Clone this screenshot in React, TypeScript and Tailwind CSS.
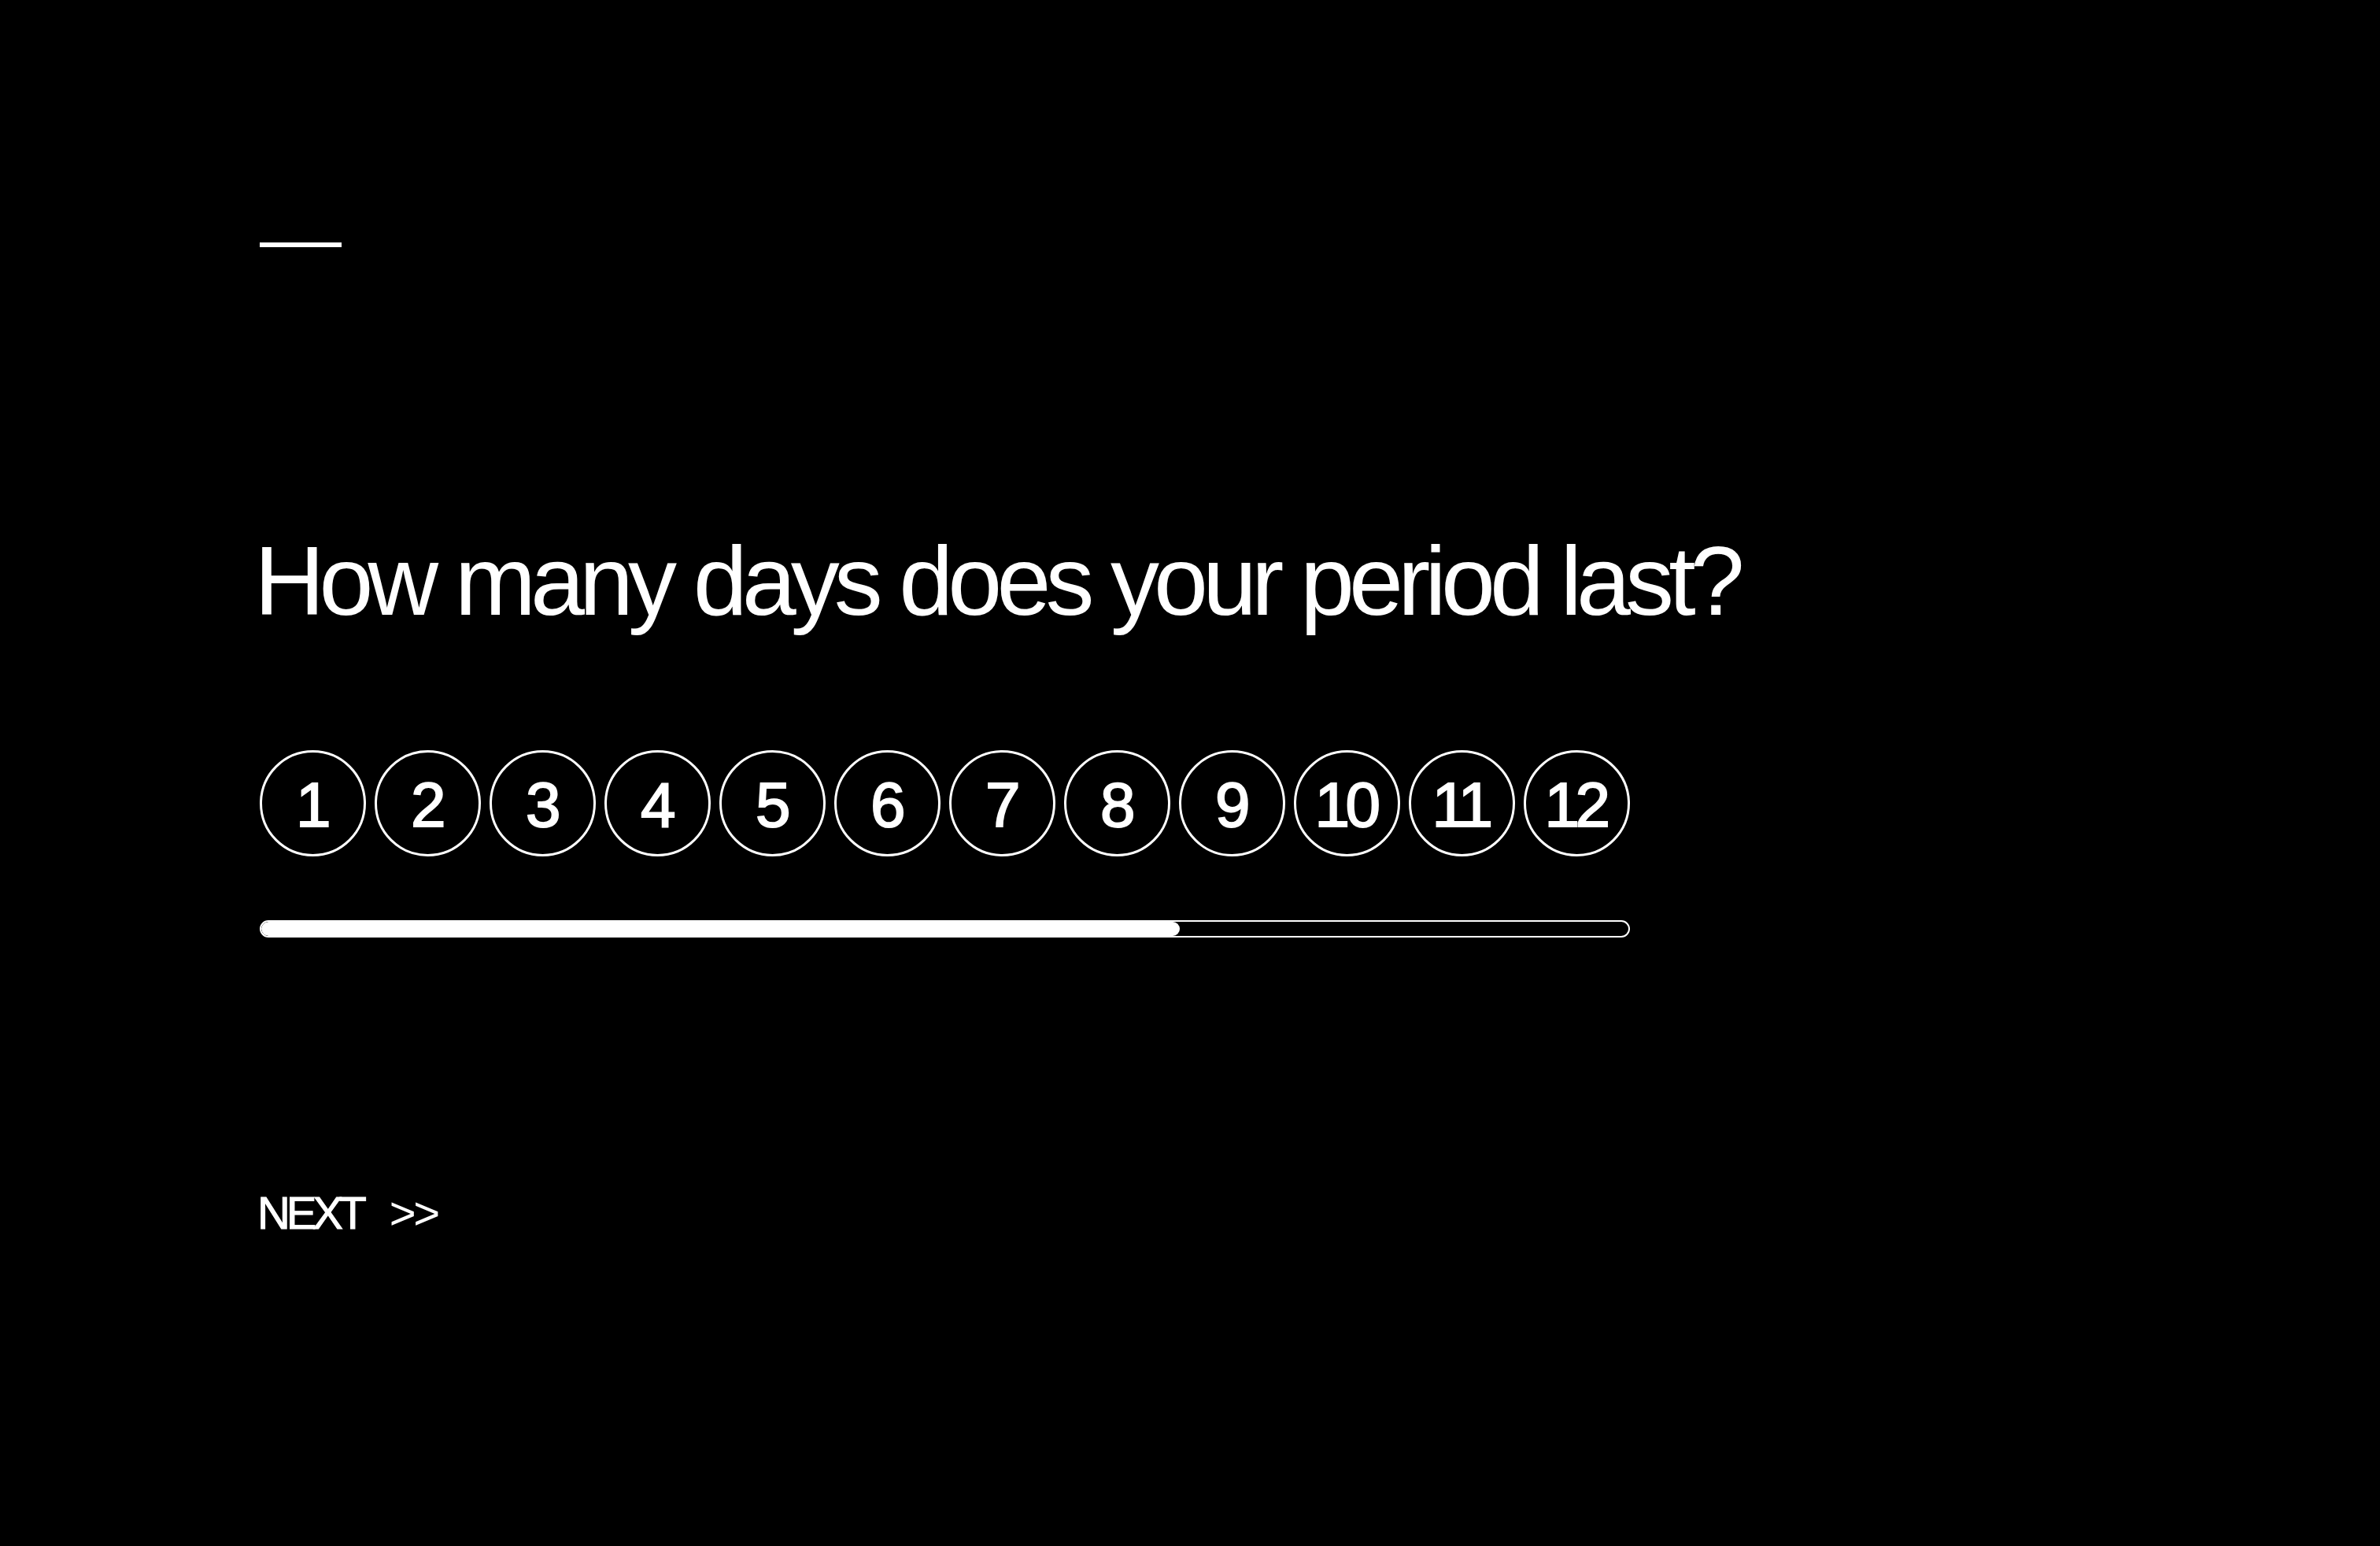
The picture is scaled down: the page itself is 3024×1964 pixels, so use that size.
import React from "react";

const days = [1, 2, 3, 4, 5, 6, 7, 8, 9, 10, 11, 12];

export default function App() {
  return (
    <div
      className="min-h-screen w-full bg-black text-white pl-[330px] pt-[308px] pb-[300px]"
      style={{ fontFamily: '"Liberation Sans", Arial, Helvetica, sans-serif' }}
    >
      <div className="w-[104px] h-[6px] bg-white" />

      <h1 className="mt-[362px] -ml-[7px] text-[124px] leading-none font-normal tracking-[-0.056em] whitespace-nowrap">
        How many days does your period last?
      </h1>

      <div className="mt-[153px] flex gap-[11px]">
        {days.map((d) => (
          <button
            key={d}
            className="w-[135px] h-[135px] rounded-full border-[3px] border-white bg-black flex items-center justify-center pt-[5px] text-[80px] leading-none font-normal tracking-[-0.07em] text-white [-webkit-text-stroke:2px_#ffffff]"
          >
            <span className="-ml-[4px]">{d}</span>
          </button>
        ))}
      </div>

      <div className="mt-[81px] w-[1741px] h-[22px] rounded-full border-2 border-white overflow-hidden">
        <div className="h-full w-[1167px] rounded-full bg-white" />
      </div>

      <div className="mt-[321px] flex items-center gap-[34px] text-[58px] leading-none">
        <span className="tracking-[-0.09em] -ml-[3px] [-webkit-text-stroke:1px_#ffffff]">NEXT</span>
        <span className="tracking-[-0.06em]">&gt;&gt;</span>
      </div>
    </div>
  );
}
